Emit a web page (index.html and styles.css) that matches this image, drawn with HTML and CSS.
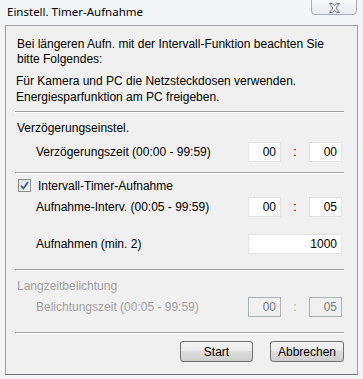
FILE: index.html
```html
<!DOCTYPE html>
<html lang="de">
<head>
    <meta charset="UTF-8">
    <title>Einstell. Timer-Aufnahme</title>
    <link rel="stylesheet" href="styles.css">
</head>
<body>
    <!-- Titelleiste -->
    <div class="titlebar">
        <span class="title">Einstell. Timer-Aufnahme</span>
        <div class="close">
            <svg width="13" height="10" viewBox="0 0 13 10">
                <path d="M1.5 0.5 H4.5 L6.5 3 L8.5 0.5 H11.5 L8 5 L11.5 9.5 H8.5 L6.5 7 L4.5 9.5 H1.5 L5 5 Z" fill="#fff" stroke="#6d7785" stroke-width="1" stroke-linejoin="round"/>
            </svg>
        </div>
    </div>

    <!-- Dialog -->
    <div class="panel">
        <div class="notice">
            <p class="notice-head">Bei längeren Aufn. mit der Intervall-Funktion beachten Sie<br>bitte Folgendes:</p>
            <p class="notice-list">Für Kamera und PC die Netzsteckdosen verwenden.<br>Energiesparfunktion am PC freigeben.</p>
        </div>

        <div class="sep"></div>

        <div class="group-title">Verzögerungseinstel.</div>
        <div class="row row-delay">
            <span class="label">Verzögerungszeit (00:00 - 99:59)</span>
            <div class="time">
                <input class="field" value="00">
                <span class="colon">:</span>
                <input class="field" value="00">
            </div>
        </div>

        <div class="sep sep-2"></div>

        <label class="check-row">
            <span class="check">
                <svg width="9" height="9" viewBox="0 0 9 9">
                    <path d="M1 4.5 L3.5 7.5 L8 1" fill="none" stroke="#3d5ba8" stroke-width="1.8"/>
                </svg>
            </span>
            Intervall-Timer-Aufnahme
        </label>
        <div class="row row-interval">
            <span class="label">Aufnahme-Interv. (00:05 - 99:59)</span>
            <div class="time">
                <input class="field" value="00">
                <span class="colon">:</span>
                <input class="field" value="05">
            </div>
        </div>
        <div class="row row-count">
            <span class="label">Aufnahmen (min. 2)</span>
            <input class="field field-wide" value="1000">
        </div>

        <div class="sep sep-3"></div>

        <div class="group-title disabled">Langzeitbelichtung</div>
        <div class="row row-bulb disabled">
            <span class="label">Belichtungszeit (00:05 - 99:59)</span>
            <div class="time">
                <input class="field" value="00" disabled>
                <span class="colon">:</span>
                <input class="field" value="05" disabled>
            </div>
        </div>

        <div class="sep sep-4"></div>

        <div class="buttons">
            <button class="btn">Start</button>
            <button class="btn btn-cancel">Abbrechen</button>
        </div>
    </div>
</body>
</html>
```

FILE: styles.css
```css
* {
    margin: 0;
    padding: 0;
    box-sizing: border-box;
}

body {
    width: 363px;
    height: 379px;
    overflow: hidden;
    background: #f3f5f8;
    font-family: 'Liberation Sans', Arial, sans-serif;
    font-size: 12px;
    color: #000;
}

/* Titelleiste */
.titlebar {
    height: 25px;
    display: flex;
    align-items: flex-start;
}

.title {
    font-family: 'Noto Sans', sans-serif;
    font-size: 11.5px;
    line-height: 16px;
    margin: 4px 0 0 7px;
    color: #000;
}

.close {
    width: 46px;
    height: 16px;
    margin: -1px 6px 0 auto;
    border: 1px solid #a5acb6;
    border-radius: 0 0 4px 4px;
    background: linear-gradient(#f6f7f9, #e9ecf0);
    display: flex;
    justify-content: center;
    align-items: center;
    padding-top: 1px;
}

/* Dialogbereich */
.panel {
    width: 353px;
    height: 350px;
    margin-left: 5px;
    background: #f0f0f0;
    border: 1px solid #a0a0a0;
    border-bottom-color: #6f6f6f;
    padding: 0 13px 0 9px;
    display: flex;
    flex-direction: column;
}

.notice {
    padding: 11px 0 0 2px;
}

.notice-head {
    line-height: 15px;
}

.notice-list {
    margin-top: 6px;
    margin-left: -1px;
    line-height: 16px;
}

.sep {
    height: 2px;
    border-top: 1px solid #a0a0a0;
    border-bottom: 1px solid #fff;
    margin-top: 6px;
}

.sep-2 {
    margin-top: 10px;
}

.sep-3,
.sep-4 {
    margin-top: 15px;
}

.group-title {
    line-height: 15px;
    margin-top: 8px;
    padding-left: 2px;
}

.row {
    height: 20px;
    display: flex;
    align-items: center;
    justify-content: space-between;
    padding: 0 2px 0 21px;
}

.row-delay {
    margin-top: 6px;
}

.row-interval {
    margin-top: 4px;
}

.row-count {
    margin-top: 17px;
}

.row-bulb {
    margin-top: 3px;
}

.time {
    display: flex;
    align-items: center;
}

.colon {
    width: 28px;
    text-align: center;
}

.field {
    width: 33px;
    height: 20px;
    border: 1px solid #e2e3e4;
    background: #fff;
    font-family: inherit;
    font-size: 12px;
    color: #000;
    text-align: right;
    padding: 0 4px 0 0;
    outline: none;
}

.field-wide {
    width: 94px;
}

.disabled {
    color: #a0a0a0;
}

.disabled .field {
    background: #f0f0f0;
    border-color: #adb2b5;
    color: #7a7a7a;
}

/* Kontrollkästchen */
.check-row {
    height: 15px;
    margin-top: 4px;
    display: flex;
    align-items: center;
    padding-left: 3px;
    gap: 7px;
}

.check {
    width: 13px;
    height: 13px;
    border: 1px solid #8e8f8f;
    background: linear-gradient(135deg, #dcdcdc, #fbfbfb);
    display: flex;
    justify-content: center;
    align-items: center;
}

/* Schaltflächen */
.buttons {
    margin-top: 7px;
    display: flex;
    justify-content: flex-end;
    gap: 17px;
}

.btn {
    width: 73px;
    height: 21px;
    border: 1px solid #707070;
    border-radius: 3px;
    background: linear-gradient(#f2f2f2 0%, #ebebeb 45%, #dddddd 50%, #cfcfcf 100%);
    font-family: inherit;
    font-size: 12px;
    color: #000;
}

.btn-cancel {
    width: 74px;
}
```
